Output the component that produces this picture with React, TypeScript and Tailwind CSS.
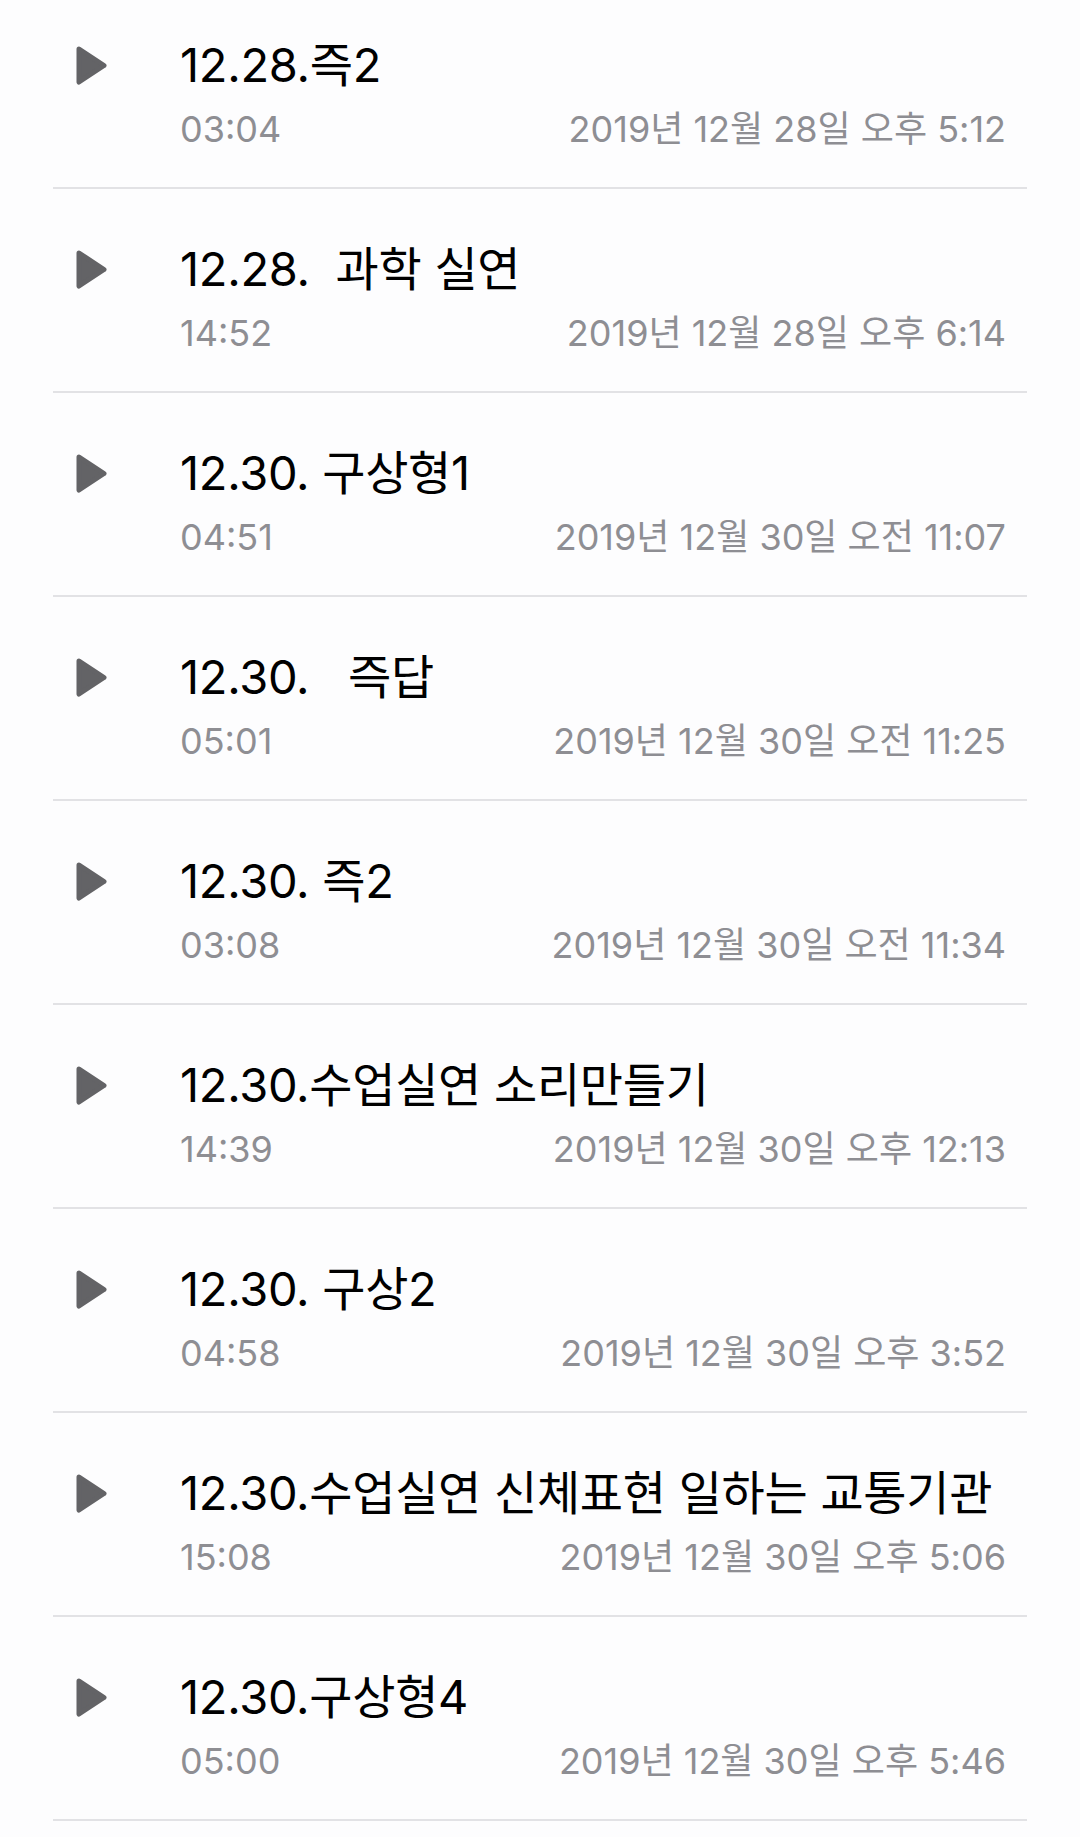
const recordings = [
  { title: "12.28.즉2", length: "03:04", date: "2019년 12월 28일 오후 5:12" },
  { title: "12.28.  과학 실연", length: "14:52", date: "2019년 12월 28일 오후 6:14" },
  { title: "12.30. 구상형1", length: "04:51", date: "2019년 12월 30일 오전 11:07" },
  { title: "12.30.   즉답", length: "05:01", date: "2019년 12월 30일 오전 11:25" },
  { title: "12.30. 즉2", length: "03:08", date: "2019년 12월 30일 오전 11:34" },
  { title: "12.30.수업실연 소리만들기", length: "14:39", date: "2019년 12월 30일 오후 12:13" },
  { title: "12.30. 구상2", length: "04:58", date: "2019년 12월 30일 오후 3:52" },
  { title: "12.30.수업실연 신체표현 일하는 교통기관", length: "15:08", date: "2019년 12월 30일 오후 5:06" },
  { title: "12.30.구상형4", length: "05:00", date: "2019년 12월 30일 오후 5:46" },
];

function PlayIcon() {
  return (
    <svg width="31" height="39" viewBox="0 0 31 39" className="shrink-0">
      <path
        d="M3 3 L28 19.5 L3 36 Z"
        fill="#636366"
        stroke="#636366"
        strokeWidth="5"
        strokeLinejoin="round"
      />
    </svg>
  );
}

export default function App() {
  return (
    <main
      className="min-h-screen w-[1080px] bg-[#fdfdfe] overflow-hidden"
      style={{ fontFamily: 'Inter, "Noto Sans CJK KR", sans-serif' }}
    >
      <div className="-mt-[15px] mx-[53px]">
        {recordings.map((rec) => (
          <div
            key={rec.date}
            className="h-[204px] border-b-2 border-[#e2e2e5] pt-[50px] pl-[23px] pr-[21px]"
          >
            <div className="flex items-center h-[60px]">
              <PlayIcon />
              <span className="ml-[73px] text-[47px] leading-[60px] tracking-[-0.3px] text-black whitespace-pre">
                {rec.title}
              </span>
            </div>
            <div className="flex justify-between items-center h-[46px] mt-[11px] pl-[104px] text-[36px] leading-[46px] text-[#8e8e93]">
              <span>{rec.length}</span>
              <span>{rec.date}</span>
            </div>
          </div>
        ))}
      </div>
    </main>
  );
}
